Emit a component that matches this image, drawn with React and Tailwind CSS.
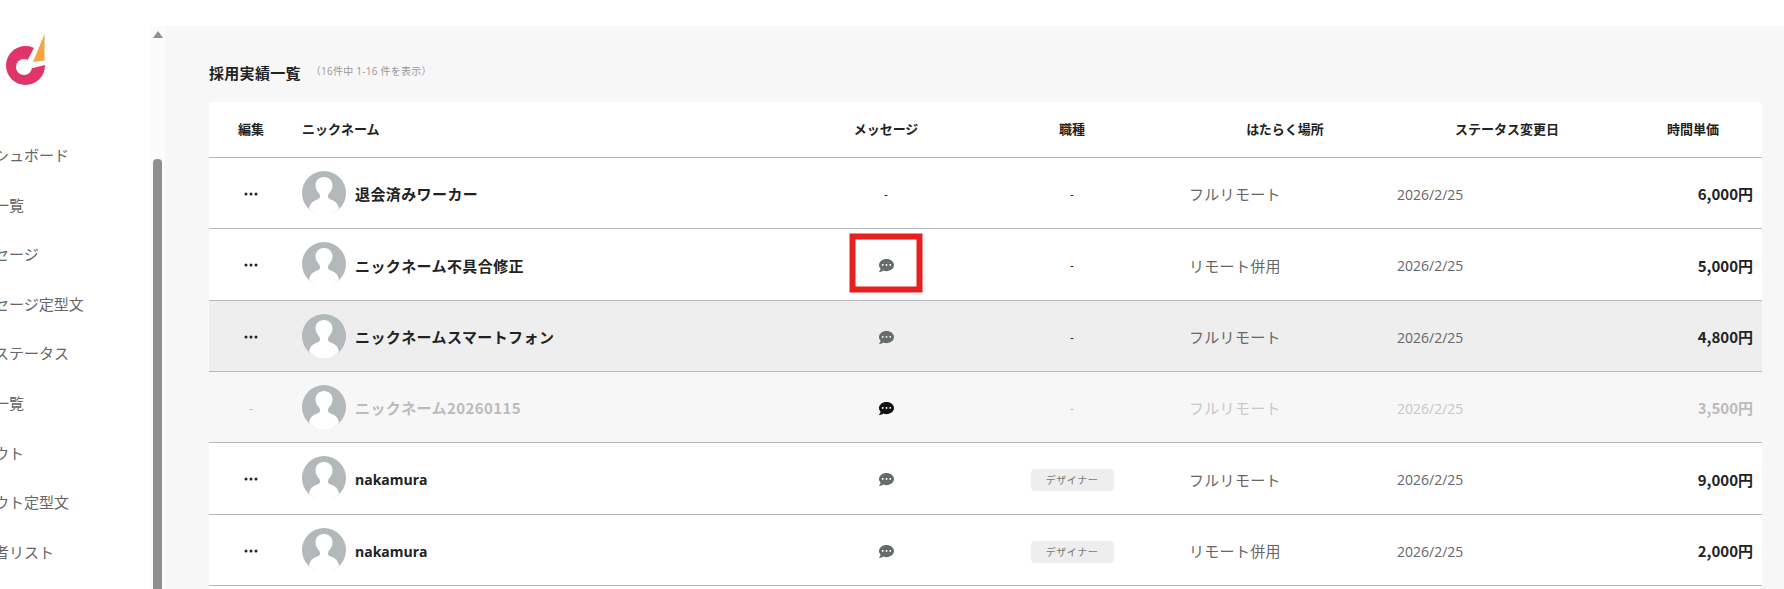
import { BsThreeDots } from "react-icons/bs";
import { FaCommentDots } from "react-icons/fa";

const navItems = [
  "ダッシュボード",
  "案件一覧",
  "メッセージ",
  "メッセージ定型文",
  "採用ステータス",
  "請求一覧",
  "スカウト",
  "スカウト定型文",
  "候補者リスト",
];

const rows = [
  { name: "退会済みワーカー", message: false, place: "フルリモート", price: "6,000円" },
  { name: "ニックネーム不具合修正", message: true, place: "リモート併用", price: "5,000円", marked: true },
  { name: "ニックネームスマートフォン", message: true, place: "フルリモート", price: "4,800円", hovered: true },
  { name: "ニックネーム20260115", message: true, place: "フルリモート", price: "3,500円", disabled: true },
  { name: "nakamura", message: true, job: "デザイナー", place: "フルリモート", price: "9,000円" },
  { name: "nakamura", message: true, job: "デザイナー", place: "リモート併用", price: "2,000円" },
];

const columns = "grid grid-cols-[84px_515px_156px_216px_210px_234px_138px]";

const Logo = () => (
  <svg width="50" height="56" viewBox="0 30 50 56">
    <circle cx="25.5" cy="65.500" r="19.500" fill="#e0356a" />
    <circle cx="24" cy="67" r="8" fill="#fff" />
    <polygon points="24,67 35,46 47,46 47,64.500 33,68" fill="#fff" />
    <polygon points="44.500,34 33,62 44.500,60.500" fill="#f5a33c" />
  </svg>
);

const Avatar = () => (
  <svg width="44" height="44" viewBox="0 0 44 44" className="shrink-0">
    <circle cx="22" cy="22" r="22" fill="#b3b8ba" />
    <path
      d="M22 6C17 6 13.500 9.500 13.500 14.500C13.500 18 15.500 21 17.500 23C18.500 25.500 18 27 16.500 28C13 29.500 8.500 30.500 7 37.500A19.500 19.500 0 0 0 37 37.500C35.500 30.500 31 29.500 27.500 28C26 27 25.500 25.500 26.500 23C28.500 21 30.500 18 30.500 14.500C30.500 9.500 27 6 22 6Z"
      fill="#fff"
    />
  </svg>
);

const Sidebar = () => (
  <aside className="w-[150px] shrink-0 overflow-hidden">
    <div className="pt-[30px]">
      <Logo />
    </div>
    <ul className="-ml-[36px] mt-[59px] flex flex-col gap-[29px] whitespace-nowrap text-[15px] leading-[20.600px] text-[#666]">
      {navItems.map((item) => (
        <li key={item}>{item}</li>
      ))}
    </ul>
  </aside>
);

const Scrollbar = () => (
  <div className="mt-[26px] flex w-[15px] shrink-0 flex-col items-start bg-[#fbfbfb] pl-[3px]">
    <div className="mt-[5px] h-0 w-0 border-x-[5px] border-b-[7px] border-x-transparent border-b-[#8f8f8f]" />
    <div className="mt-[121px] h-[430px] w-[9px] rounded-t-[4px] bg-[#8f8f8f]" />
  </div>
);

const Row = ({ row }) => {
  const bg = row.hovered ? "bg-[#eeeeee]" : row.disabled ? "bg-[#f7f7f7]" : "bg-white";
  const strong = row.disabled ? "text-[#bbbbbb]" : "text-[#222]";
  const soft = row.disabled ? "text-[#c8c8c8]" : "text-[#666]";

  return (
    <div className={`${columns} h-[71.330px] border-t border-[#b3b8ba] ${bg}`}>
      <div className={`flex items-center justify-center pt-[2px] ${strong}`}>
        {row.disabled ? <span className="pt-[2px] text-[12px]">-</span> : <BsThreeDots size={16} />}
      </div>
      <div className="flex items-center gap-[9px] pl-[9px]">
        <Avatar />
        <span
          className={`pt-[3px] font-bold ${
            row.job ? "text-[14px]" : "font-['Noto_Sans_CJK_JP'] text-[15px] tracking-[0.4px]"
          } ${strong}`}
        >
          {row.name}
        </span>
      </div>
      <div className="flex items-center justify-center pt-[3px] text-[12px] text-[#222]">
        {row.message ? (
          <div className="relative">
            <FaCommentDots size={15} className={row.disabled ? "text-[#111]" : "text-[#666b6c]"} />
            {row.marked && (
              <div className="absolute left-1/2 top-[calc(50%-3px)] h-[59px] w-[73px] -translate-x-1/2 -translate-y-1/2 border-[6px] border-[#e81f1f]" />
            )}
          </div>
        ) : (
          "-"
        )}
      </div>
      <div className={`flex items-center justify-center pt-[4px] text-[12px] ${strong}`}>
        {row.job ? (
          <span className="h-[22px] w-[83px] rounded-[4px] bg-[#eeeeee] text-center text-[10px] leading-[22px] tracking-[0.5px] text-[#777]">
            {row.job}
          </span>
        ) : (
          "-"
        )}
      </div>
      <div className={`flex items-center pl-[9px] pt-[3px] text-[15px] tracking-[0.3px] ${soft}`}>{row.place}</div>
      <div className={`flex items-center pl-[7px] pt-[3px] text-[14px] ${soft}`}>2026/2/25</div>
      <div
        className={`flex items-center justify-end pr-[9px] pt-[3px] font-['Noto_Sans_CJK_JP'] text-[15px] font-bold ${strong}`}
      >
        {row.price}
      </div>
    </div>
  );
};

export default function App() {
  return (
    <div className="flex h-[589px] w-[1784px] overflow-hidden bg-white font-['Open_Sans','Noto_Sans_CJK_JP',sans-serif]">
      <Sidebar />
      <Scrollbar />
      <main className="mt-[26px] min-w-0 flex-1 bg-[#f7f7f7] pl-[44px] pr-[22px]">
        <div className="flex h-[76px] items-center gap-[10px] pt-[18px]">
          <h1 className="text-[15px] font-bold tracking-[0.3px] text-[#222]">採用実績一覧</h1>
          <p className="-mt-1 text-[10px] tracking-[0.25px] text-[#999]">（16件中 1-16 件を表示）</p>
        </div>
        <div className="h-[520px] rounded-t-[4px] bg-white">
          <div className={`${columns} h-[55px] items-center text-center text-[13px] font-bold text-[#222]`}>
            <div>編集</div>
            <div className="pl-[9px] text-left">ニックネーム</div>
            <div>メッセージ</div>
            <div>職種</div>
            <div>はたらく場所</div>
            <div>ステータス変更日</div>
            <div>時間単価</div>
          </div>
          {rows.map((row, i) => (
            <Row key={i} row={row} />
          ))}
          <div className="border-t border-[#b3b8ba]" />
        </div>
      </main>
    </div>
  );
}
